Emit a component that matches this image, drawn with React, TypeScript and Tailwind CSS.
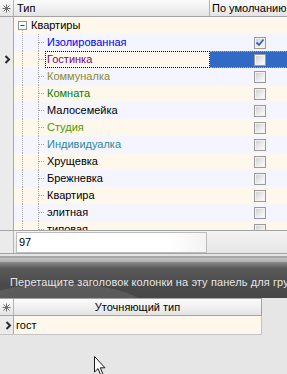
import React from "react";

type Row = { name: string; color: string; checked?: boolean; selected?: boolean };

const rows: Row[] = [
  { name: "Изолированная", color: "#0000ff", checked: true },
  { name: "Гостинка", color: "#800080", selected: true },
  { name: "Коммуналка", color: "#8c8a2c" },
  { name: "Комната", color: "#008000" },
  { name: "Малосемейка", color: "#000000" },
  { name: "Студия", color: "#4d9900" },
  { name: "Индивидуалка", color: "#1f8ba0" },
  { name: "Хрущевка", color: "#000000" },
  { name: "Брежневка", color: "#000000" },
  { name: "Квартира", color: "#000000" },
  { name: "элитная", color: "#000000" },
  { name: "типовая", color: "#000000" },
];

const Asterisk = () => (
  <svg width="9" height="9" viewBox="0 0 9 9" className="block">
    <g stroke="#707070" strokeWidth="1">
      <line x1="4.5" y1="0.5" x2="4.5" y2="8.5" />
      <line x1="0.5" y1="4.5" x2="8.5" y2="4.5" />
      <line x1="1.5" y1="1.5" x2="7.5" y2="7.5" />
      <line x1="7.5" y1="1.5" x2="1.5" y2="7.5" />
    </g>
  </svg>
);

const Pointer = () => (
  <svg width="7" height="9" viewBox="0 0 7 9" className="block">
    <polyline points="1.5,1 5,4.5 1.5,8" fill="none" stroke="#2b2b2b" strokeWidth="2" />
  </svg>
);

const Checkbox = ({ checked }: { checked?: boolean }) => (
  <div className="relative h-[12px] w-[12px] border border-[#9a9a9a] bg-[linear-gradient(135deg,#cacaca_0%,#ebebeb_55%,#ffffff_100%)]">
    <div className="absolute inset-0 border border-[#f2f2f2]" />
    {checked && (
      <svg width="10" height="10" viewBox="0 0 10 10" className="absolute left-0 top-0">
        <polyline points="1.5,4.5 4,7 8.5,1.5" fill="none" stroke="#2f62c4" strokeWidth="1.8" />
      </svg>
    )}
  </div>
);

const RootLines = () => (
  <svg width="17" height="17" viewBox="0 0 17 17" className="block shrink-0">
    <rect x="4.5" y="4.5" width="8" height="8" fill="#fbfbfb" stroke="#8797a8" />
    <line x1="6.5" y1="8.5" x2="10.5" y2="8.5" stroke="#404040" />
    <line x1="8.5" y1="13" x2="8.5" y2="17" stroke="#a8a8a8" strokeDasharray="1 1" />
  </svg>
);

const ChildLines = () => (
  <svg width="31" height="17" viewBox="0 0 31 17" className="block shrink-0">
    <g stroke="#a8a8a8" strokeDasharray="1 1">
      <line x1="8.5" y1="0" x2="8.5" y2="17" />
      <line x1="24.5" y1="0" x2="24.5" y2="17" />
      <line x1="25" y1="8.5" x2="31" y2="8.5" />
    </g>
  </svg>
);

const headerBg = "bg-[linear-gradient(180deg,#fbfbfb_0%,#f1f1f1_50%,#e3e3e3_100%)]";

export default function App() {
  return (
    <div className="relative flex h-[374px] w-[287px] flex-col overflow-hidden bg-[#e6e6e6] font-['Liberation_Sans',Arial,sans-serif] text-[11px] text-black">
      {/* header of the tree grid */}
      <div className={`flex h-[17px] shrink-0 border-b border-[#a3a3a3] ${headerBg}`}>
        <div className="flex w-[14px] shrink-0 items-center justify-center border-r border-[#b4b4b4]">
          <Asterisk />
        </div>
        <div className="flex w-[196px] shrink-0 items-center border-r border-[#b4b4b4] pl-[3px]">Тип</div>
        <div className="flex w-[100px] shrink-0 items-center pl-[2px] whitespace-nowrap">По умолчанию</div>
      </div>

      {/* tree body */}
      <div className="flex h-[213px] shrink-0 flex-col overflow-hidden bg-white">
        <div className="flex h-[17px] shrink-0">
          <div className="w-[14px] shrink-0 border-r border-[#a8a8a8] bg-[#ebebeb]" />
          <div className="flex w-[196px] shrink-0 items-center bg-[#fef7ec]">
            <RootLines />
            <span className="whitespace-nowrap">Квартиры</span>
          </div>
          <div className="w-[100px] shrink-0 bg-[#fef7ec]" />
        </div>
        {rows.map((r, i) => {
          const bg = i % 2 === 0 ? "bg-[#f5f5ff]" : "bg-[#fef7ec]";
          return (
            <div key={r.name} className="flex h-[17px] shrink-0">
              <div className="flex w-[14px] shrink-0 items-center border-r border-[#a8a8a8] bg-[#ebebeb] pl-[4px]">
                {r.selected && <Pointer />}
              </div>
              <div className={`flex w-[196px] shrink-0 ${bg}`}>
                <ChildLines />
                <div
                  className={`flex flex-1 items-center border pl-[1px] whitespace-nowrap ${
                    r.selected ? "border-dotted border-black" : "border-transparent"
                  }`}
                  style={{ color: r.color }}
                >
                  {r.name}
                </div>
              </div>
              <div
                className={`flex w-[100px] shrink-0 items-center justify-center ${
                  r.selected ? "border-y border-dotted border-[#e8a030] bg-[#316ac5]" : bg
                }`}
              >
                <Checkbox checked={r.checked} />
              </div>
            </div>
          );
        })}
      </div>

      {/* footer with the filter box */}
      <div className="flex h-[24px] shrink-0 border-y border-[#a3a3a3] bg-[linear-gradient(180deg,#f3f3f3_0%,#e6e6e6_100%)]">
        <div className="w-[14px] shrink-0 border-r border-[#b4b4b4] bg-[#ebebeb]" />
        <div className="pl-[2px] pt-[1px]">
          <div className="flex h-[21px] w-[191px] items-center border border-[#bdbdbd] bg-[linear-gradient(90deg,#ffffff_0%,#ffffff_80%,#f3f3f3_100%)] pl-[2px]">
            97
          </div>
        </div>
      </div>

      {/* splitter */}
      <div className="h-[2px] shrink-0 bg-[#e4e4e4]" />
      <div className="h-[2px] shrink-0 bg-[#a6a6a6]" />
      <div className="h-[4px] shrink-0 bg-[linear-gradient(180deg,#c4c4c4_0%,#b0b0b0_100%)]" />

      {/* group panel */}
      <div className="flex h-[36px] shrink-0 items-center overflow-hidden bg-[radial-gradient(ellipse_140px_40px_at_60px_46px,rgba(255,255,255,0.10)_0%,rgba(255,255,255,0.10)_60%,transparent_62%),linear-gradient(180deg,#8a8a8a_0%,#5a5a5a_18%,#4a4a4a_60%,#474747_100%)] pl-[10px] pt-[4px] whitespace-nowrap tracking-[0.1px] text-[#e6e6e6]">
        Перетащите заголовок колонки на эту панель для группировки
      </div>

      {/* detail grid */}
      <div className={`flex h-[18px] w-[262px] shrink-0 border-y border-r border-[#a3a3a3] ${headerBg}`}>
        <div className="flex w-[14px] shrink-0 items-center justify-center border-r border-[#b4b4b4]">
          <Asterisk />
        </div>
        <div className="flex flex-1 items-center justify-center">Уточняющий тип</div>
      </div>
      <div className="flex h-[19px] w-[262px] shrink-0 border-r border-b border-[#c4c4c4]">
        <div className="flex w-[14px] shrink-0 items-center border-r border-[#a8a8a8] bg-[#ebebeb] pl-[5px]">
          <Pointer />
        </div>
        <div className="flex flex-1 items-center bg-[#fef7ec] pl-[2px]">гост</div>
      </div>

      {/* mouse pointer */}
      <svg width="13" height="21" viewBox="0 0 13 21" className="absolute left-[94px] top-[356px]">
        <path d="M0.5,0.5 L0.5,16 L4,12.6 L6.6,18.8 L8.8,17.8 L6.3,11.8 L11,11.8 Z" fill="#ffffff" stroke="#1a1a1a" strokeWidth="1" />
      </svg>
    </div>
  );
}
